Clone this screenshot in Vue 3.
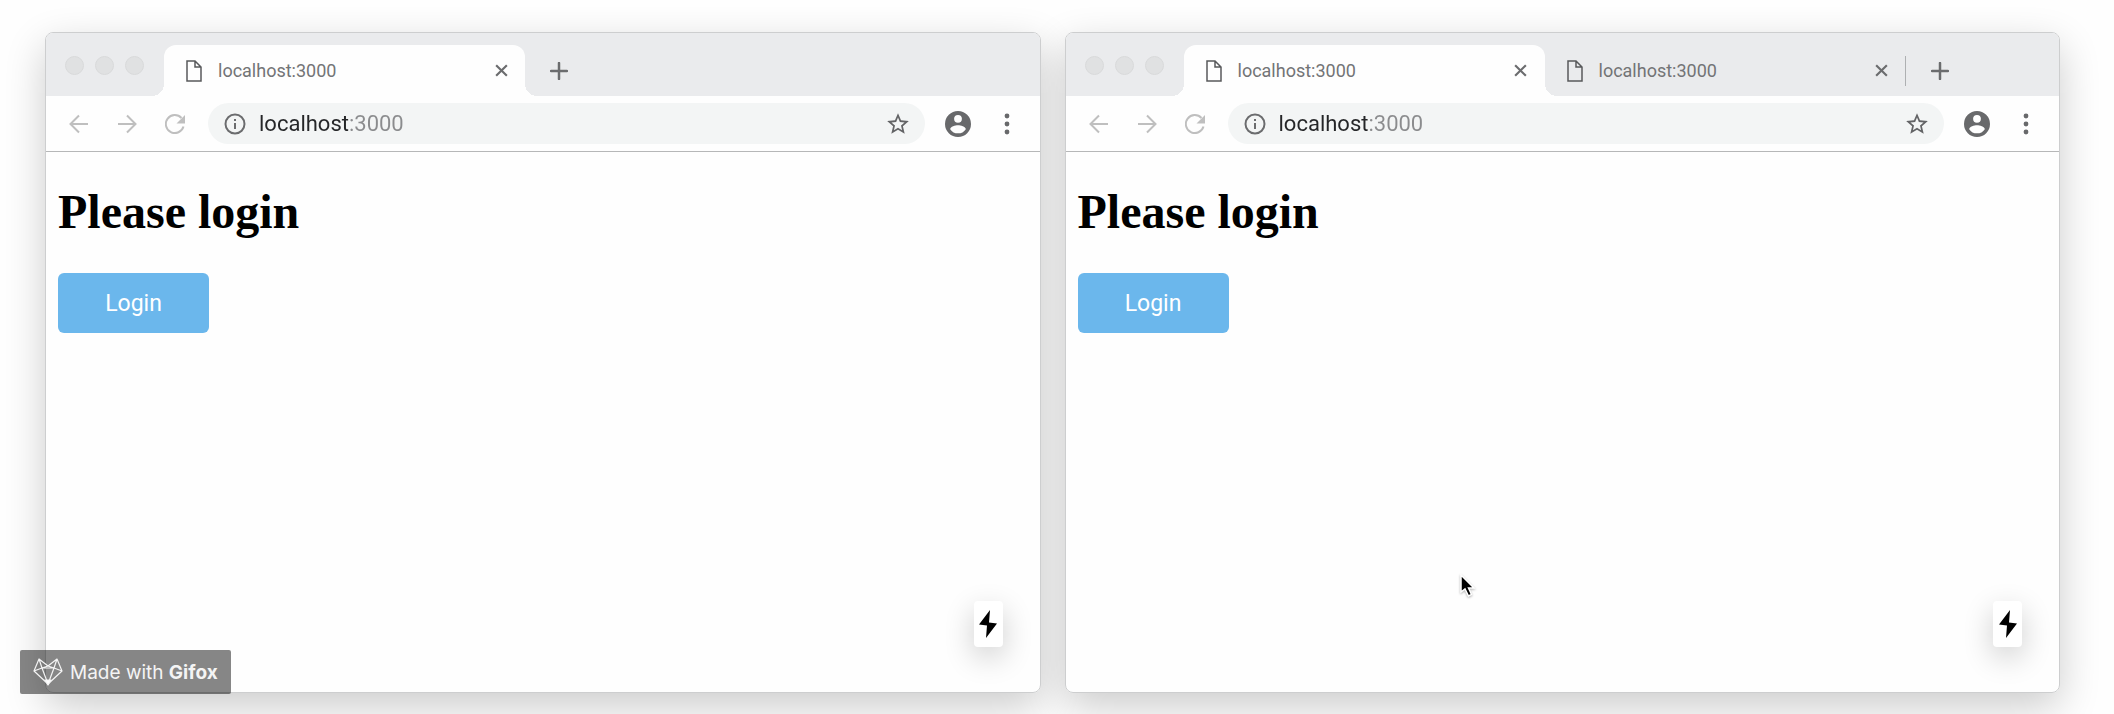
<script setup>
import { ref } from 'vue'

const windows = ref([
  { id: 'left', url: 'localhost:3000', tabs: ['localhost:3000'], cursor: false },
  { id: 'right', url: 'localhost:3000', tabs: ['localhost:3000', 'localhost:3000'], cursor: true }
])
</script>

<template>
  <main class="desktop">
    <section v-for="win in windows" :key="win.id" class="window">
      <div class="frame">
        <div class="tab-strip">
          <div class="lights">
            <button v-for="name in ['Close', 'Minimise', 'Zoom']" :key="name" class="light" type="button" :aria-label="name"></button>
          </div>
          <div v-for="(tab, i) in win.tabs" :key="i" class="tab" :class="{ active: i === 0 }">
            <svg class="file" viewBox="0 0 16 22" aria-hidden="true">
              <path d="M1 1h8l6 6v14H1zM9 1v6h6" />
            </svg>
            <span class="tab-title">{{ tab }}</span>
            <button class="tab-close" type="button" aria-label="Close tab">
              <svg viewBox="0 0 14 14"><path d="M2 2l10 10M12 2L2 12" /></svg>
            </button>
          </div>
          <button class="new-tab" type="button" aria-label="New tab">
            <svg viewBox="0 0 18 18"><path d="M9 1v16M1 9h16" /></svg>
          </button>
        </div>

        <div class="toolbar">
          <div class="nav">
            <button type="button" aria-label="Back">
              <svg viewBox="0 0 20 20"><path d="M19 10H2M10 1.5L1.5 10l8.500 8.500" /></svg>
            </button>
            <button type="button" aria-label="Forward">
              <svg viewBox="0 0 20 20"><path d="M1 10h17M10 1.5l8.500 8.500-8.500 8.500" /></svg>
            </button>
            <button type="button" aria-label="Reload">
              <svg viewBox="0 0 20 20">
                <path d="M18.500 12.500A9 9 0 1 1 16.500 4" />
                <path class="solid" d="M20 1v8.500h-8.500z" />
              </svg>
            </button>
          </div>
          <div class="address">
            <svg class="info" viewBox="0 0 22 22" aria-hidden="true">
              <circle cx="11" cy="11" r="9.500" />
              <path d="M11 10v6M11 6v2" />
            </svg>
            <input v-model="win.url" class="url" type="text" aria-label="Address" spellcheck="false" />
            <button class="star" type="button" aria-label="Bookmark this page">
              <svg viewBox="0 0 24 24">
                <path d="M22 9.240l-7.190-.62L12 2 9.190 8.630 2 9.240l5.460 4.730L5.820 21 12 17.270 18.180 21l-1.630-7.030zM12 15.400l-3.760 2.270 1-4.280-3.320-2.880 4.380-.38L12 6.100l1.710 4.040 4.380.38-3.320 2.880 1 4.280z" />
              </svg>
            </button>
          </div>
          <button class="account" type="button" aria-label="Profile">
            <svg viewBox="2 2 20 20">
              <path d="M12 2a10 10 0 1 0 0 20 10 10 0 0 0 0-20zm0 3a3 3 0 1 1 0 6 3 3 0 0 1 0-6zm0 14.200a7.200 7.200 0 0 1-6-3.220c.03-1.990 4-3.080 6-3.080 1.990 0 5.970 1.090 6 3.080a7.200 7.200 0 0 1-6 3.220z" />
            </svg>
          </button>
          <button class="menu" type="button" aria-label="Menu">
            <svg viewBox="0 0 20 22">
              <circle cx="10" cy="3" r="2.400" /><circle cx="10" cy="11" r="2.400" /><circle cx="10" cy="19" r="2.400" />
            </svg>
          </button>
        </div>

        <div class="page">
          <h1>Please login</h1>
          <button class="login" type="button">Login</button>
          <button class="bolt" type="button" aria-label="Quick actions">
            <svg viewBox="0 0 18 28"><path d="M11 0L0 14.500l8 1L7 28 18 13.500l-8-1z" /></svg>
          </button>
          <svg v-if="win.cursor" class="cursor" viewBox="0 0 16 24" aria-hidden="true">
            <path d="M1 1v17l4-3 3.500 7 3-1.500L8.500 14H14z" />
          </svg>
        </div>
      </div>
    </section>

    <a class="badge" href="#">
      <svg viewBox="0 0 30 28" aria-hidden="true">
        <path d="M6 1L1 13l14 13 14-13-5-12-9 7zM6 1l3 9h12l3-9M9 10l6 16 6-16M1 13l8-3M29 13l-8-3M9 10l6-2 6 2" />
        <path class="nose" d="M12 22h6l-3 5z" />
      </svg>
      <span>Made with <b>Gifox</b></span>
    </a>
  </main>
</template>

<style>
body {
  margin: 0;
  background: #fefefe;
}
</style>

<style scoped>
* {
  box-sizing: border-box;
}

.desktop {
  position: relative;
  isolation: isolate;
  display: grid;
  grid-template-columns: repeat(2, minmax(0, 1fr));
  gap: 24px;
  min-height: 100vh;
  padding: 32px 54px 21px 45px;
  overflow: hidden;
  font-family: Roboto, "Liberation Sans", sans-serif;
}

.window {
  display: flex;
  border-radius: 8px;
}

/* Shadows sit on their own layer so that one window never shades its neighbour. */
.window::before {
  content: "";
  position: relative;
  z-index: -1;
  width: 100%;
  margin-right: -100%;
  border-radius: 8px;
  box-shadow: 0 14px 40px rgba(0, 0, 0, 0.2);
}

.frame {
  display: flex;
  flex: 1;
  flex-direction: column;
  min-width: 0;
  overflow: hidden;
  border: 1px solid #cdcecf;
  border-radius: 8px;
  background: #fefefe;
}

button {
  display: flex;
  flex: none;
  align-items: center;
  justify-content: center;
  padding: 0;
  border: 0;
  background: none;
  font-family: inherit;
}

svg {
  display: block;
  flex: none;
  fill: none;
}

.tab-strip {
  display: flex;
  height: 63px;
  padding-top: 12px;
  background: #eaebed;
}

.lights {
  display: flex;
  flex: none;
  gap: 11px;
  margin: 11px 20px 0 19px;
}

.light {
  width: 19px;
  height: 19px;
  border: 1px solid #d9dadb;
  border-radius: 50%;
  background: #e0e1e2;
}

.tab {
  position: relative;
  display: flex;
  flex: 0 1 361px;
  align-items: center;
  min-width: 0;
  padding: 0 12px 0 22px;
}

.tab.active {
  border-radius: 12px 12px 0 0;
  background: #fefefe;
}

.tab.active::before,
.tab.active::after {
  content: "";
  position: absolute;
  bottom: 0;
  width: 12px;
  height: 12px;
}

.tab.active::before {
  right: 100%;
  background: radial-gradient(circle at 0 0, #eaebed 12px, #fefefe 12px);
}

.tab.active::after {
  left: 100%;
  background: radial-gradient(circle at 100% 0, #eaebed 12px, #fefefe 12px);
}

.tab:not(.active)::after {
  content: "";
  position: absolute;
  top: 11px;
  right: 0;
  width: 1px;
  height: 30px;
  background: #aeb0b2;
}

.file {
  width: 16px;
  height: 22px;
  stroke: #58595b;
  stroke-width: 1.5;
}

.tab-title {
  flex: 1;
  min-width: 0;
  margin-left: 16px;
  overflow: hidden;
  color: #737476;
  font-size: 18px;
  line-height: 24px;
  white-space: nowrap;
}

.tab-close {
  width: 24px;
  height: 24px;
}

.tab-close svg {
  width: 15px;
  height: 15px;
  stroke: #6b6c6e;
  stroke-width: 2;
}

.new-tab {
  width: 28px;
  height: 28px;
  margin: 12px 0 0 20px;
}

.new-tab svg {
  width: 18px;
  height: 18px;
  stroke: #6b6c6e;
  stroke-width: 2.5;
  stroke-linecap: round;
}

.toolbar {
  display: flex;
  align-items: center;
  padding: 7px 23px;
  border-bottom: 1px solid #b6b7b8;
}

.nav {
  display: flex;
  gap: 28px;
  margin-right: 23px;
}

.nav svg {
  width: 20px;
  height: 20px;
  stroke: #bfbfbf;
  stroke-width: 2;
}

.nav .solid {
  fill: #bfbfbf;
  stroke: none;
}

.address {
  display: flex;
  flex: 1;
  align-items: center;
  min-width: 0;
  height: 41px;
  padding: 0 14px 0 16px;
  border-radius: 21px;
  background: #f3f5f5;
}

.info {
  width: 22px;
  height: 22px;
  stroke: #6b6c6e;
  stroke-width: 2;
}

.url {
  flex: 1;
  min-width: 0;
  height: 32px;
  margin-left: 13px;
  padding: 0;
  border: 0;
  outline: 0;
  background: linear-gradient(90deg, #252628 90px, #8b8c8e 90px);
  background-clip: text;
  -webkit-background-clip: text;
  color: #252628;
  -webkit-text-fill-color: transparent;
  font-family: inherit;
  font-size: 22px;
}

.star svg {
  width: 26px;
  height: 26px;
  fill: #636466;
}

.account {
  margin-left: 20px;
}

.account svg {
  width: 26px;
  height: 26px;
  fill: #68696b;
}

.menu {
  margin-left: 26px;
}

.menu svg {
  width: 20px;
  height: 22px;
  fill: #68696b;
}

.page {
  position: relative;
  flex: 1;
  padding: 32px 12px;
}

h1 {
  margin: 0 0 33px;
  color: #000;
  font-family: "Liberation Serif", serif;
  font-size: 48px;
  line-height: 56px;
}

.login {
  min-width: 151px;
  height: 60px;
  border-radius: 6px;
  background: #6bb7ec;
  color: #fff;
  font-size: 23px;
}

.bolt {
  position: absolute;
  right: 37px;
  bottom: 45px;
  width: 29px;
  height: 46px;
  border-radius: 4px;
  background: #fff;
  box-shadow: 0 10px 30px rgba(0, 0, 0, 0.2);
}

.bolt svg {
  width: 18px;
  height: 28px;
  fill: #000;
}

.cursor {
  position: absolute;
  top: 422px;
  left: 394px;
  width: 16px;
  height: 24px;
  fill: #000;
  stroke: #fff;
  stroke-width: 1.5;
  filter: drop-shadow(0 1px 1px rgba(0, 0, 0, 0.3));
}

.badge {
  position: absolute;
  bottom: 20px;
  left: 20px;
  display: flex;
  align-items: center;
  gap: 7px;
  height: 44px;
  padding: 0 13px;
  border-radius: 2px;
  background: rgba(0, 0, 0, 0.47);
  color: #f4f4f4;
  font-family: Inter, sans-serif;
  font-size: 19px;
  text-decoration: none;
  white-space: nowrap;
}

.badge svg {
  width: 30px;
  height: 28px;
  stroke: #f4f4f4;
  stroke-width: 1.2;
  stroke-linejoin: round;
}

.badge .nose {
  fill: #fff;
}
</style>
